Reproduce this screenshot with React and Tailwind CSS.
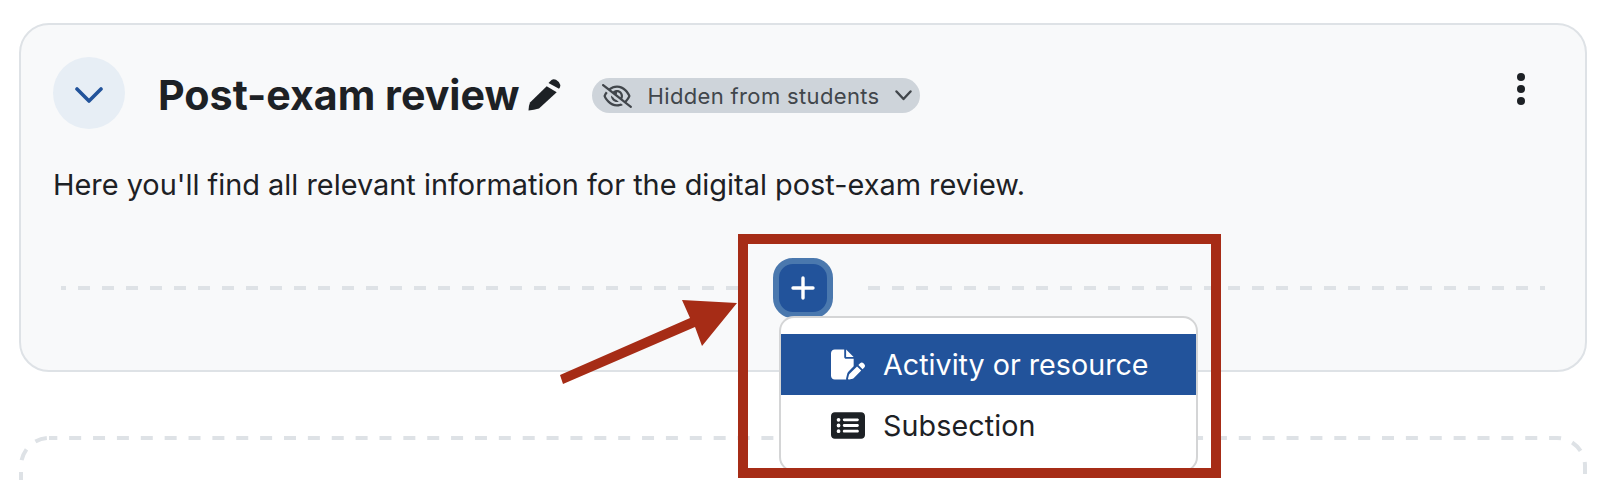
import React from "react";
import { FaRegEyeSlash, FaFilePen, FaRectangleList } from "react-icons/fa6";

const dashLeft = "bg-[repeating-linear-gradient(90deg,#dee2e6_0_5px,transparent_5px_17px,#dee2e6_17px_24px)]";
const dashRight = "bg-[repeating-linear-gradient(90deg,#dee2e6_0_12px,transparent_12px_24px)]";

export default function App() {
  return (
    <div className="relative w-[1608px] h-[480px] overflow-hidden bg-white pl-[19px] pt-[23px] font-['Inter',sans-serif] text-[#1d2125]">
      <section className="h-[349px] w-[1568px] rounded-[30px] border-2 border-[#dee2e6] bg-[#f8f9fa] px-[32px] pt-[32px]">
        <div className="flex h-[72px] items-center">
          <button className="flex h-[72px] w-[72px] shrink-0 items-center justify-center rounded-full bg-[#e7eef5]">
            <svg className="mt-[3px]" width="28" height="16" viewBox="0 0 28 16" fill="none" stroke="#22539b" strokeWidth="3.6" strokeLinecap="round" strokeLinejoin="round">
              <path d="M2 2 L14 14 L26 2" />
            </svg>
          </button>
          <h3 className="ml-[33px] mt-[4px] text-[41.2px] leading-[48px] font-bold whitespace-nowrap">Post-exam review</h3>
          <svg className="ml-[8px] mt-[3px] shrink-0" width="33" height="32" viewBox="0 0 33 32" fill="#1d2125">
            <path d="M0.5 31.5 Q0.8 26 2 23.5 L18.7 7.3 L28.7 13.3 L11 29.5 Q6 31 0.5 31.5Z" />
            <path d="M20.5 4 L23.5 1 Q25.5 -0.3 28 0.8 Q31.5 2.7 32.3 6 Q32.5 8 31 9.7 Z" />
          </svg>
          <div className="ml-[31px] mt-[5px] flex h-[35px] w-[328px] items-center rounded-full bg-[#ced4da] pl-[10px] text-[#41464b]">
            <FaRegEyeSlash className="h-[24px] w-[30px] shrink-0" />
            <span className="ml-[16px] text-[22px] leading-none whitespace-nowrap tracking-[0.35px]">Hidden from students</span>
            <svg className="ml-[15px] shrink-0" width="17" height="11" viewBox="0 0 17 11" fill="none" stroke="#41464b" strokeWidth="2.4" strokeLinecap="round" strokeLinejoin="round">
              <path d="M1.5 1.5 L8.5 9 L15.5 1.5" />
            </svg>
          </div>
          <svg className="ml-auto mr-[28px] mb-[8px] shrink-0" width="8" height="32" viewBox="0 0 8 32" fill="#1d2125">
            <circle cx="4" cy="4" r="4" />
            <circle cx="4" cy="16" r="4" />
            <circle cx="4" cy="28" r="4" />
          </svg>
        </div>
        <p className="mt-[35px] text-[28.9px] leading-[42px] whitespace-nowrap">Here you'll find all relevant information for the digital post-exam review.</p>
        <div className="mt-[52px] ml-2 flex h-[60px] items-center">
          <div className={`h-[4px] w-[684px] ${dashLeft}`} />
          <div className="relative ml-[28px] shrink-0">
            <button className="flex h-[60px] w-[60px] items-center justify-center rounded-[20px] border-[6px] border-[#4a78ae] bg-[#22539b]">
              <svg width="24" height="24" viewBox="0 0 24 24" fill="none" stroke="#fff" strokeWidth="3.4" strokeLinecap="round">
                <path d="M12 2 V22 M2 12 H22" />
              </svg>
            </button>
            <div className="absolute left-[6px] top-[58px] z-10 h-[156px] w-[419px] rounded-[15px] border-2 border-[#d4d5d6] bg-white pt-[16px] text-[28.7px]">
              <div className="flex h-[61px] items-center bg-[#22539b] pl-[50px] text-white">
                <FaFilePen className="h-[31px] w-[34px] shrink-0" />
                <span className="ml-[18px] whitespace-nowrap">Activity or resource</span>
              </div>
              <div className="flex h-[61px] items-center pl-[50px]">
                <FaRectangleList className="h-[31px] w-[34px] shrink-0" />
                <span className="ml-[18px] whitespace-nowrap tracking-[0.1px]">Subsection</span>
              </div>
            </div>
          </div>
          <div className={`ml-[35px] h-[4px] w-[677px] ${dashRight}`} />
        </div>
      </section>

      <div className="relative mt-[64px] h-[200px] w-[1568px]">
        <svg className="absolute inset-0" width="1568" height="200" fill="none">
          <rect x="2" y="2" width="1564" height="196" rx="28" stroke="#dee2e6" strokeWidth="4" strokeDasharray="12 11.87" strokeDashoffset="3.7" />
        </svg>
      </div>

      <div className="absolute left-[738px] top-[234px] z-20 h-[244px] w-[483px] border-[10px] border-[#a62c16]" />
      <svg className="absolute left-0 top-0 z-20" width="1608" height="480" fill="#a62c16">
        <polygon points="560,375 563,384 695,327 702,346 737,303 682,300 690,318" />
      </svg>
    </div>
  );
}
